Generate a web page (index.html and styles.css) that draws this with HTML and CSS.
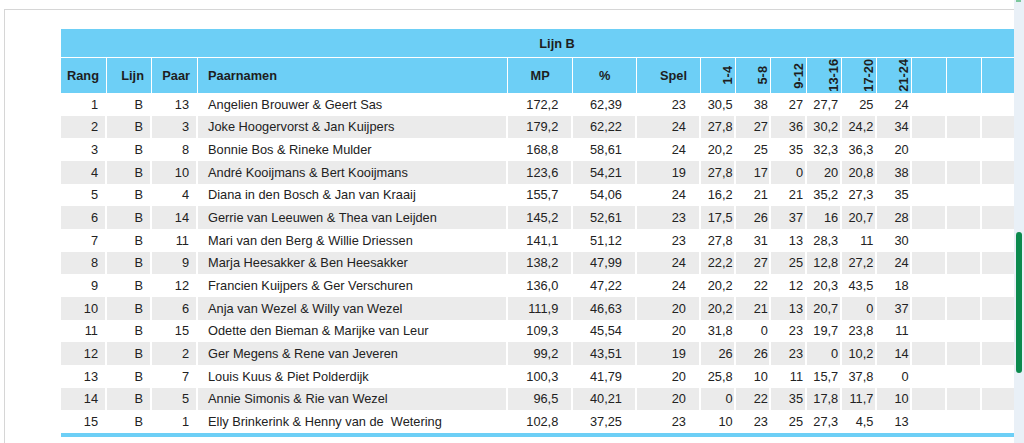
FILE: index.html
```html
<!DOCTYPE html>
<html lang="nl">
<head>
<meta charset="utf-8">
<title>Uitslag Lijn B</title>
<link rel="stylesheet" href="styles.css">
</head>
<body>
<div class="page">
  <div class="panel">
    <table class="standings">
      <colgroup>
        <col class="w-rang"><col class="w-lijn"><col class="w-paar"><col class="w-names">
        <col class="w-mp"><col class="w-pct"><col class="w-spel">
        <col class="w-r"><col class="w-r"><col class="w-r"><col class="w-r"><col class="w-r"><col class="w-r">
        <col class="w-r"><col class="w-r"><col class="w-r"><col class="w-r">
      </colgroup>
      <thead>
        <tr class="title-row"><th colspan="17">Lijn B</th></tr>
        <tr class="head-row">
          <th class="h-right">Rang</th>
          <th class="h-right">Lijn</th>
          <th class="h-right">Paar</th>
          <th class="h-left">Paarnamen</th>
          <th class="h-center">MP</th>
          <th class="h-center">%</th>
          <th class="h-spel">Spel</th>
          <th class="h-rot"><span>1-4</span></th>
          <th class="h-rot"><span>5-8</span></th>
          <th class="h-rot"><span>9-12</span></th>
          <th class="h-rot"><span>13-16</span></th>
          <th class="h-rot"><span>17-20</span></th>
          <th class="h-rot"><span>21-24</span></th>
          <th></th><th></th><th></th><th></th>
        </tr>
      </thead>
      <tbody>
        <tr><td>1</td><td>B</td><td>13</td><td>Angelien Brouwer &amp; Geert Sas</td><td>172,2</td><td>62,39</td><td>23</td><td>30,5</td><td>38</td><td>27</td><td>27,7</td><td>25</td><td>24</td><td></td><td></td><td></td><td></td></tr>
        <tr><td>2</td><td>B</td><td>3</td><td>Joke Hoogervorst &amp; Jan Kuijpers</td><td>179,2</td><td>62,22</td><td>24</td><td>27,8</td><td>27</td><td>36</td><td>30,2</td><td>24,2</td><td>34</td><td></td><td></td><td></td><td></td></tr>
        <tr><td>3</td><td>B</td><td>8</td><td>Bonnie Bos &amp; Rineke Mulder</td><td>168,8</td><td>58,61</td><td>24</td><td>20,2</td><td>25</td><td>35</td><td>32,3</td><td>36,3</td><td>20</td><td></td><td></td><td></td><td></td></tr>
        <tr><td>4</td><td>B</td><td>10</td><td>André Kooijmans &amp; Bert Kooijmans</td><td>123,6</td><td>54,21</td><td>19</td><td>27,8</td><td>17</td><td>0</td><td>20</td><td>20,8</td><td>38</td><td></td><td></td><td></td><td></td></tr>
        <tr><td>5</td><td>B</td><td>4</td><td>Diana in den Bosch &amp; Jan van Kraaij</td><td>155,7</td><td>54,06</td><td>24</td><td>16,2</td><td>21</td><td>21</td><td>35,2</td><td>27,3</td><td>35</td><td></td><td></td><td></td><td></td></tr>
        <tr><td>6</td><td>B</td><td>14</td><td>Gerrie van Leeuwen &amp; Thea van Leijden</td><td>145,2</td><td>52,61</td><td>23</td><td>17,5</td><td>26</td><td>37</td><td>16</td><td>20,7</td><td>28</td><td></td><td></td><td></td><td></td></tr>
        <tr><td>7</td><td>B</td><td>11</td><td>Mari van den Berg &amp; Willie Driessen</td><td>141,1</td><td>51,12</td><td>23</td><td>27,8</td><td>31</td><td>13</td><td>28,3</td><td>11</td><td>30</td><td></td><td></td><td></td><td></td></tr>
        <tr><td>8</td><td>B</td><td>9</td><td>Marja Heesakker &amp; Ben Heesakker</td><td>138,2</td><td>47,99</td><td>24</td><td>22,2</td><td>27</td><td>25</td><td>12,8</td><td>27,2</td><td>24</td><td></td><td></td><td></td><td></td></tr>
        <tr><td>9</td><td>B</td><td>12</td><td>Francien Kuijpers &amp; Ger Verschuren</td><td>136,0</td><td>47,22</td><td>24</td><td>20,2</td><td>22</td><td>12</td><td>20,3</td><td>43,5</td><td>18</td><td></td><td></td><td></td><td></td></tr>
        <tr><td>10</td><td>B</td><td>6</td><td>Anja van Wezel &amp; Willy van Wezel</td><td>111,9</td><td>46,63</td><td>20</td><td>20,2</td><td>21</td><td>13</td><td>20,7</td><td>0</td><td>37</td><td></td><td></td><td></td><td></td></tr>
        <tr><td>11</td><td>B</td><td>15</td><td>Odette den Bieman &amp; Marijke van Leur</td><td>109,3</td><td>45,54</td><td>20</td><td>31,8</td><td>0</td><td>23</td><td>19,7</td><td>23,8</td><td>11</td><td></td><td></td><td></td><td></td></tr>
        <tr><td>12</td><td>B</td><td>2</td><td>Ger Megens &amp; Rene van Jeveren</td><td>99,2</td><td>43,51</td><td>19</td><td>26</td><td>26</td><td>23</td><td>0</td><td>10,2</td><td>14</td><td></td><td></td><td></td><td></td></tr>
        <tr><td>13</td><td>B</td><td>7</td><td>Louis Kuus &amp; Piet Polderdijk</td><td>100,3</td><td>41,79</td><td>20</td><td>25,8</td><td>10</td><td>11</td><td>15,7</td><td>37,8</td><td>0</td><td></td><td></td><td></td><td></td></tr>
        <tr><td>14</td><td>B</td><td>5</td><td>Annie Simonis &amp; Rie van Wezel</td><td>96,5</td><td>40,21</td><td>20</td><td>0</td><td>22</td><td>35</td><td>17,8</td><td>11,7</td><td>10</td><td></td><td></td><td></td><td></td></tr>
        <tr><td>15</td><td>B</td><td>1</td><td>Elly Brinkerink &amp; Henny van de&nbsp; Wetering</td><td>102,8</td><td>37,25</td><td>23</td><td>10</td><td>23</td><td>25</td><td>27,3</td><td>4,5</td><td>13</td><td></td><td></td><td></td><td></td></tr>
      </tbody>
    </table>
  </div>
  <div class="scrollbar"><div class="scroll-cap"></div><div class="thumb"></div></div>
</div>
</body>
</html>
```

FILE: styles.css
```css
html, body {
  margin: 0;
  padding: 0;
  background: #ffffff;
}

.page {
  display: flex;
  width: 1024px;
  height: 443px;
  overflow: hidden;
}

.panel {
  flex: 1;
  min-width: 0;
  margin: 9px 0 0 4px;
  border-top: 1px solid #d6d6d6;
  border-left: 1px solid #d6d6d6;
  padding: 19px 0 0 56px;
  overflow: hidden;
}

.scrollbar {
  width: 10px;
  flex: none;
  background: #e9f0f7;
}

.scroll-cap {
  width: 5px;
  height: 2px;
  margin-left: 2px;
  background: #7cc79c;
}

.thumb {
  width: 6px;
  height: 141px;
  margin: 230px 0 0 2px;
  border-radius: 3px;
  background: #0b8a4d;
}

.standings {
  table-layout: fixed;
  width: 992px;
  border-collapse: separate;
  border-spacing: 0;
  border-bottom: 4px solid #6dcff6;
  font-family: "Liberation Sans", Arial, sans-serif;
  font-size: 12.8px;
  color: #222222;
}

.w-rang { width: 46px; }
.w-lijn { width: 45px; }
.w-paar { width: 46px; }
.w-names { width: 310px; }
.w-mp { width: 65.3px; }
.w-pct { width: 63.7px; }
.w-spel { width: 64px; }
.w-r { width: 35.2px; }

.standings th {
  background: #6dcff6;
  font-weight: bold;
  padding: 0;
  color: #1e1e1e;
}

.title-row {
  height: 29px;
}

.title-row th {
  border-bottom: 1px solid #ffffff;
  text-align: center;
  vertical-align: middle;
}

.head-row {
  height: 35px;
}

.head-row th {
  border-right: 1px solid #ffffff;
  vertical-align: middle;
}

.h-right { text-align: right; padding-right: 7px !important; }
.h-left { text-align: left; padding-left: 10px !important; }
.h-center { text-align: center; }
.h-spel { text-align: right; padding-right: 13px !important; }

.h-rot {
  text-align: right;
  padding-right: 1px !important;
}

.h-rot span {
  display: inline-block;
  writing-mode: vertical-rl;
  transform: rotate(180deg);
  line-height: 13px;
  vertical-align: middle;
}

.standings tbody tr {
  height: 22.667px;
}

.standings td {
  padding: 0 1.5px 0 0;
  border-right: 2px solid #ffffff;
  text-align: right;
  white-space: nowrap;
  vertical-align: middle;
}

.standings tbody tr:nth-child(even) td {
  background: #ebebeb;
}

.standings td:nth-child(1),
.standings td:nth-child(2),
.standings td:nth-child(3) {
  padding-right: 7px;
}

.standings td:nth-child(4) {
  text-align: left;
  padding-left: 10px;
}

.standings td:nth-child(5),
.standings td:nth-child(6),
.standings td:nth-child(7) {
  padding-right: 13px;
}
```
